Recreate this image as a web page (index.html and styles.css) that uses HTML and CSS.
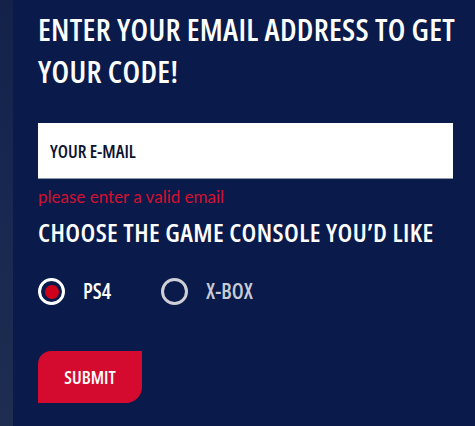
FILE: index.html
```html
<!DOCTYPE html>
<html>
<head>
<meta charset="utf-8">
<link rel="stylesheet" href="styles.css">
</head>
<body>
<div class="page">
  <div class="strip"></div>
  <main class="panel">
    <h1 class="title">ENTER YOUR EMAIL ADDRESS TO GET YOUR CODE!</h1>
    <div class="field">
      <input class="email" type="text" placeholder="YOUR E-MAIL">
    </div>
    <p class="error">please enter a valid email</p>
    <h2 class="subtitle">CHOOSE THE GAME CONSOLE YOU’D LIKE</h2>
    <div class="options">
      <label class="option checked"><span class="radio"><span class="dot"></span></span><span class="opt-label">PS4</span></label>
      <label class="option"><span class="radio"></span><span class="opt-label">X-BOX</span></label>
    </div>
    <button class="submit">SUBMIT</button>
  </main>
</div>
</body>
</html>
```
FILE: styles.css
```css
html, body {
  margin: 0;
  padding: 0;
}
body {
  background: #0a1b4b;
  font-family: "Open Sans", sans-serif;
}
.page {
  display: flex;
  height: 426px;
  overflow: hidden;
}
.strip {
  width: 13px;
  flex: none;
  background: linear-gradient(180deg, #14224a 0%, #182850 50%, #1e2d50 100%);
}
.panel {
  flex: 1;
  background: #0a1b4b;
  padding: 8px 0 0 25px;
}
.title,
.subtitle,
.email,
.opt-label,
.submit {
  font-family: "Open Sans", sans-serif;
  font-stretch: condensed;
  font-weight: 600;
}
.title {
  margin: 0;
  color: #fff;
  font-size: 31px;
  line-height: 42px;
  letter-spacing: 0.3px;
  width: 432px;
}
.field {
  margin-top: 31px;
  width: 415px;
}
.email {
  box-sizing: border-box;
  display: block;
  width: 100%;
  height: 56px;
  border: none;
  border-bottom: 1px solid #8d98b3;
  padding: 1px 12px 0;
  font-weight: 600;
  font-size: 18px;
  color: #0a1434;
  outline: none;
  background: #fff;
}
.email::placeholder {
  color: #0b1330;
  opacity: 1;
}
.error {
  margin: 8px 0 0;
  color: #d3102f;
  font-family: "Lato", sans-serif;
  font-weight: 400;
  font-size: 17px;
  line-height: 20px;
}
.subtitle {
  margin: 10px 0 0;
  color: #fff;
  font-size: 26px;
  line-height: 30px;
  letter-spacing: 0.4px;
}
.options {
  display: flex;
  gap: 50px;
  margin-top: 31px;
  align-items: center;
}
.option {
  display: flex;
  align-items: center;
  gap: 18px;
}
.radio {
  box-sizing: border-box;
  width: 27px;
  height: 27px;
  border-radius: 50%;
  border: 3px solid #cfd0d6;
  display: flex;
  align-items: center;
  justify-content: center;
}
.checked .radio {
  border-color: #fff;
}
.dot {
  width: 14px;
  height: 14px;
  border-radius: 50%;
  background: #d0021b;
}
.opt-label {
  font-size: 21px;
  line-height: 27px;
  color: #c8cbd5;
}
.checked .opt-label {
  color: #fff;
}
.submit {
  margin-top: 46px;
  width: 104px;
  height: 52px;
  border: none;
  background: #d40b2e;
  color: #fff;
  border-radius: 13px 0 16px 0;
  font-size: 18px;
  padding: 0;
  display: block;
}
```
